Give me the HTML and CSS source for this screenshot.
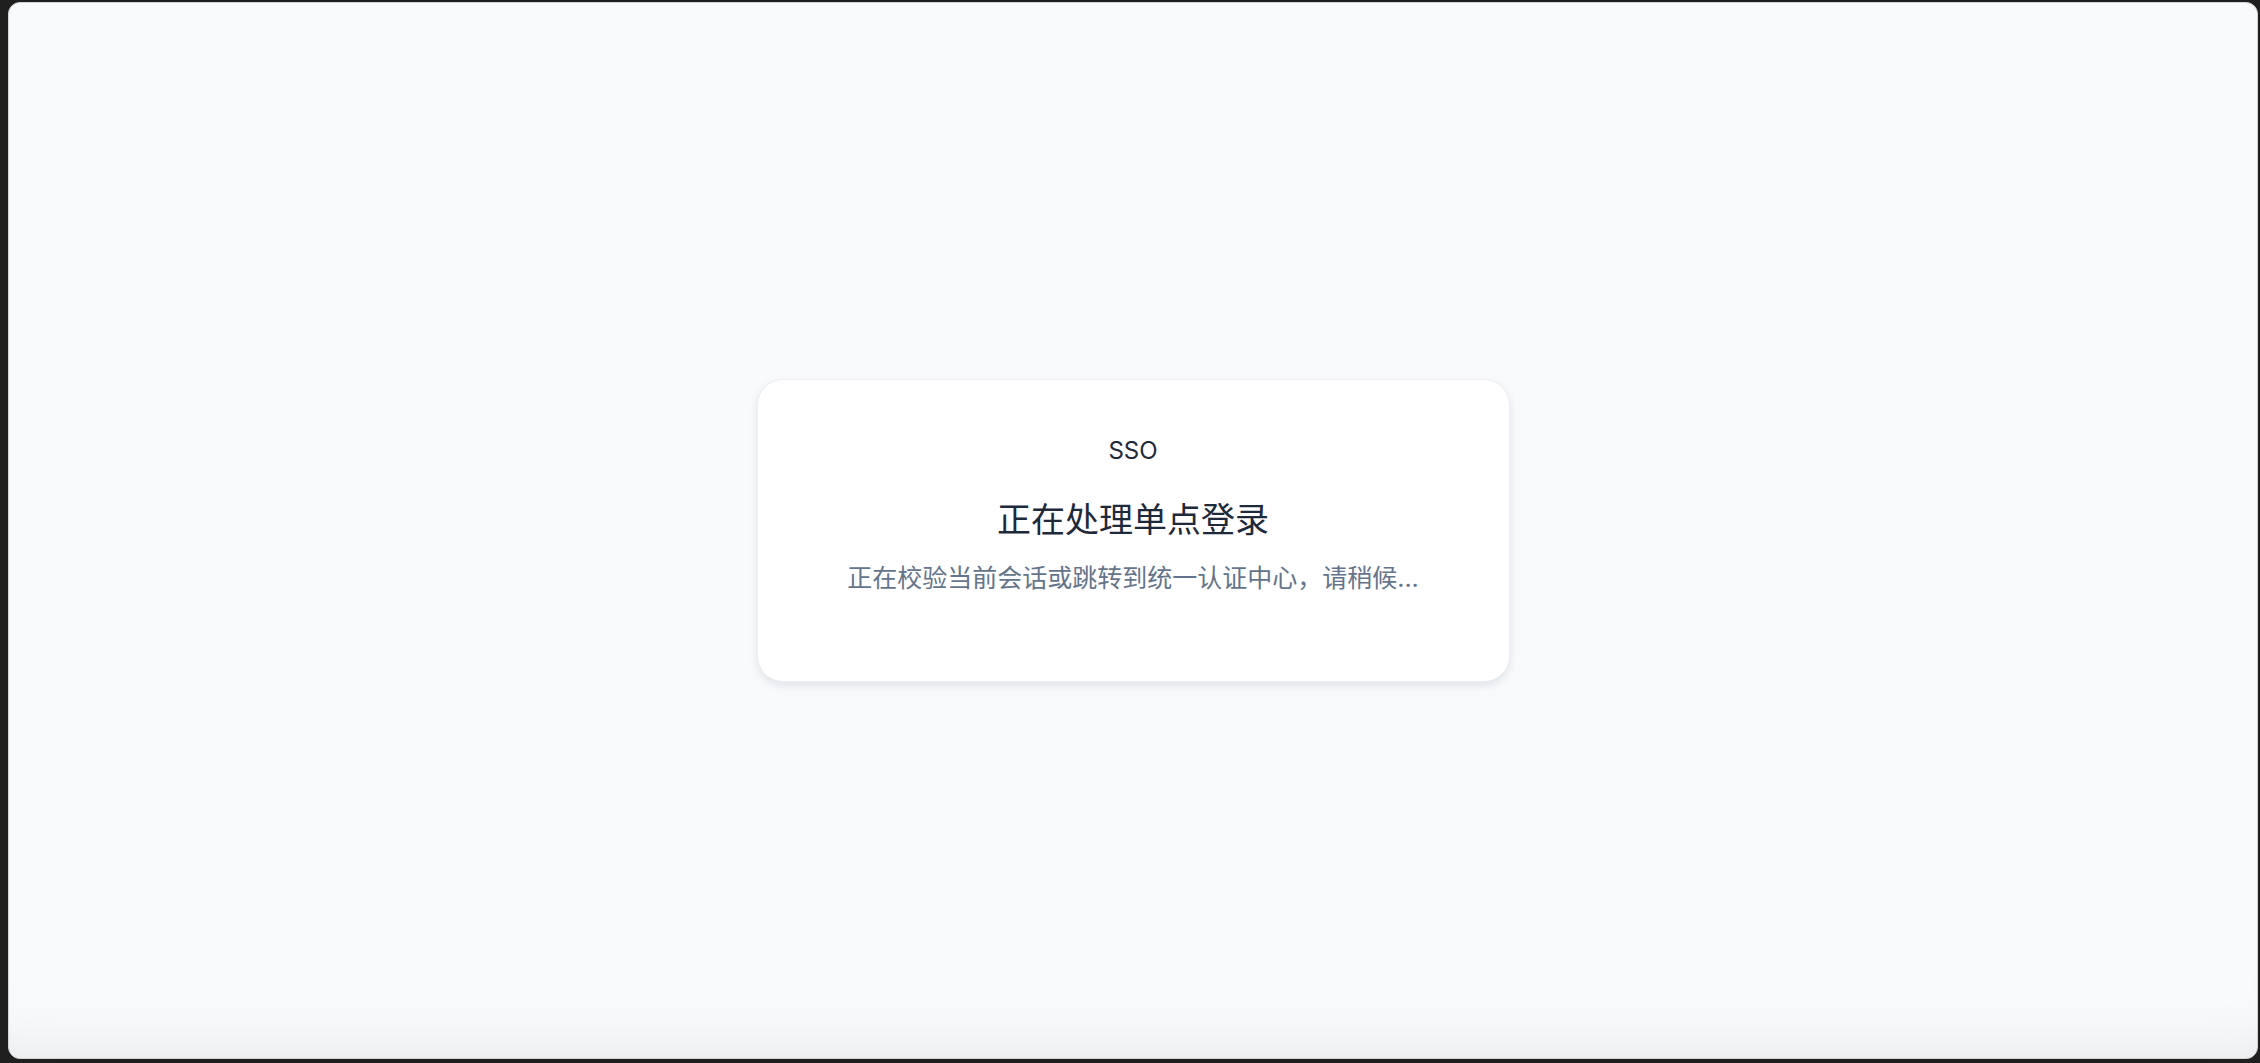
FILE: index.html
```html
<!DOCTYPE html>
<html lang="zh-CN">
<head>
<meta charset="utf-8">
<title>SSO</title>
<link rel="stylesheet" href="styles.css">
</head>
<body>
<div class="window">
  <main class="stage">
    <section class="card">
      <div class="brand">SSO</div>
      <h1 class="title">正在处理单点登录</h1>
      <p class="subtitle">正在校验当前会话或跳转到统一认证中心，请稍候...</p>
    </section>
  </main>
</div>
</body>
</html>
```

FILE: styles.css
```css
html, body {
  margin: 0;
  padding: 0;
  height: 100%;
}
body {
  background: #1f1f1f;
  font-family: Inter, "Noto Sans CJK SC", "Noto Sans", sans-serif;
  box-sizing: border-box;
  padding: 2px 2px 4px 8px;
}
.window {
  height: 100%;
  box-sizing: border-box;
  border: 1px solid #d2d3d5;
  border-radius: 12px;
  background: #f8fafc;
  box-shadow: inset 0 -50px 60px -45px rgba(0, 0, 0, 0.08);
  overflow: hidden;
}
.stage {
  height: 100%;
  display: flex;
  align-items: center;
  justify-content: center;
}
.card {
  width: 753px;
  box-sizing: border-box;
  background: #ffffff;
  border: 1px solid #eceef2;
  border-radius: 26px;
  box-shadow: 0 4px 10px rgba(15, 23, 42, 0.09);
  padding: 55px 20px 85px;
  display: flex;
  flex-direction: column;
  align-items: center;
  text-align: center;
}
.brand {
  font-size: 24px;
  line-height: 32px;
  color: #1e293b;
}
.title {
  margin: 29px 0 0;
  font-size: 34px;
  line-height: 48px;
  font-weight: 400;
  color: #1e293b;
}
.subtitle {
  margin: 16px 0 0;
  font-size: 25px;
  line-height: 36px;
  color: #64748b;
}
```
